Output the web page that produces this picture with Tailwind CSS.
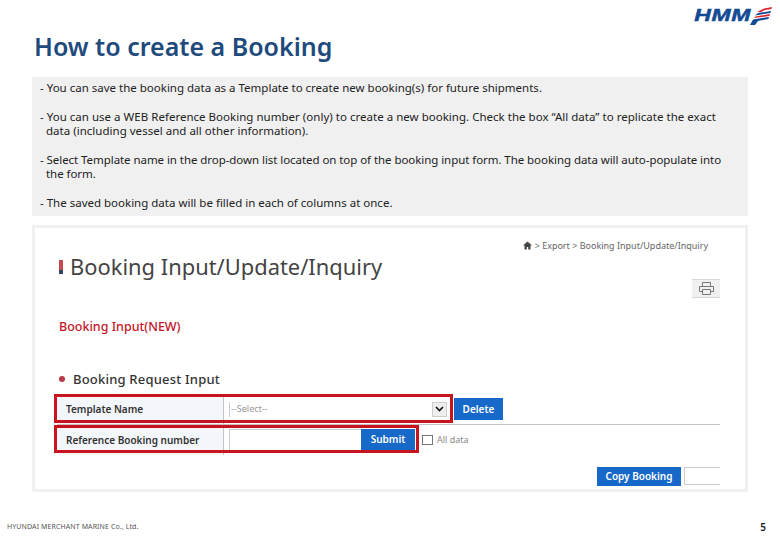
<!DOCTYPE html>
<html lang="en">
<head>
    <meta charset="UTF-8">
    <title>How to create a Booking</title>
    <script src="https://cdn.jsdelivr.net/npm/@tailwindcss/browser@4"></script>
</head>
<body class="bg-white">
<div class="relative w-[780px] h-[540px] overflow-hidden font-['Noto_Sans',sans-serif]">

    <!-- Title + logo -->
    <header class="h-[77px] pl-[34px] pr-[8px] flex justify-between">
        <h1 class="mt-[30px] text-[25px] leading-[32px] font-semibold text-[#1f4a7c]">How to create a Booking</h1>
        <div class="mt-[6px] h-[19px] flex items-center">
            <span class="font-['Liberation_Sans',sans-serif] italic font-bold text-[17px] leading-[18px] tracking-[0.5px] text-[#134a94] scale-x-[1.35] origin-right mr-[-2px] [-webkit-text-stroke:0.5px_#134a94]">HMM</span>
            <svg width="23" height="18" viewBox="0 0 23 18">
                <path d="M8 5 L15 1.5 L23 0 L22.4 2 L16 3 L12 5 Z" fill="#d9232e"/>
                <path d="M6 8.5 L9 6 L22 4 L21.4 6 Z" fill="#134a94"/>
                <path d="M5 11 L6.5 9.5 L21 7 L20.4 9 Z" fill="#d9232e"/>
                <path d="M1 18 L4 12.5 L20 10 L19.4 12 L9 14 L6 18 Z" fill="#134a94"/>
            </svg>
        </div>
    </header>

    <!-- Notes box -->
    <section class="ml-[32px] w-[716px] h-[139px] bg-[#f0f0f0] pl-[8px] pt-[4px] text-[11.5px] leading-[14.4px] text-[#222]">
        <p>- You can save the booking data as a Template to create new booking(s) for future shipments.</p>
        <p class="mt-[14.4px] tracking-[0.02px]">- You can use a WEB Reference Booking number (only) to create a new booking. Check the box “All data” to replicate the exact<br><span class="pl-[6px]">data (including vessel and all other information).</span></p>
        <p class="mt-[14.4px] tracking-[-0.06px]">- Select Template name in the drop-down list located on top of the booking input form. The booking data will auto-populate into<br><span class="pl-[6px]">the form.</span></p>
        <p class="mt-[14.4px]">- The saved booking data will be filled in each of columns at once.</p>
    </section>

    <!-- Screenshot panel -->
    <section class="relative mt-[9px] ml-[32px] w-[716px] h-[267px] border-[3px] border-[#f0f0f0] pl-[24px] pr-[25px] overflow-hidden">
        <div class="h-[27px] pt-[8px] pr-[12px] flex justify-end items-center gap-[3px] text-[9px] leading-[12px] text-[#666]">
            <svg width="9" height="9" viewBox="0 0 9 9"><path d="M4.5 0.5 L9 4.5 H7.5 V8.5 H5.2 V6 H3.8 V8.5 H1.5 V4.5 H0 Z" fill="#444"/></svg>
            <span>&gt; Export &gt; Booking Input/Update/Inquiry</span>
        </div>
        <div class="h-[24px] flex items-center">
            <span class="w-[4px] h-[14px] mr-[7px] bg-[linear-gradient(#c8484f_0_70%,#34435e_70%)]"></span>
            <h2 class="text-[21.9px] leading-[24px] text-[#444]">Booking Input/Update/Inquiry</h2>
        </div>
        <div class="flex justify-end">
            <button class="w-[28px] h-[19px] flex items-center justify-center bg-[#f0f0f0] border-t border-b border-[#d8d8d8]">
                <svg width="15" height="13" viewBox="0 0 15 13" fill="none" stroke="#777"><path d="M3.5 4.5 V0.5 H11.5 V4.5 M3 9.5 H0.5 V4.5 H14.5 V9.5 H12 M3.5 7.5 H11.5 V12.5 H3.5 Z"/></svg>
            </button>
        </div>
        <p class="mt-[21px] text-[12.5px] leading-[16px] font-medium text-[#c2162a]">Booking Input(NEW)</p>
        <div class="mt-[35px] h-[18px] flex items-center">
            <span class="w-[6px] h-[6px] rounded-full bg-[#b93a46] mr-[8px]"></span>
            <h3 class="text-[13px] leading-[18px] font-medium text-[#333] tracking-[0.2px]">Booking Request Input</h3>
        </div>

        <!-- Form rows -->
        <div class="mt-[8px] ml-[-2px] w-[663px] text-[10px] font-semibold text-[#333]">
            <div class="flex h-[29px] border-b border-[#c4c4c4]">
                <div class="w-[167px] pl-[9px] pb-[2px] flex items-center bg-[#f3f6fa] border-r border-[#c4c4c4]">Template Name</div>
                <div class="flex items-center pl-[5px] pb-[2px]">
                    <div class="w-[218px] h-[15px] pl-[1px] flex justify-between items-center border-l border-[#ccc] text-[9px] font-normal text-[#999]">
                        <span>--Select--</span>
                        <span class="w-[15px] h-[15px] flex items-center justify-center bg-[#eee] border border-[#ccc]">
                            <svg width="9" height="6" viewBox="0 0 9 6" fill="none" stroke="#111" stroke-width="1.6"><path d="M1 1 L4.5 4.5 L8 1"/></svg>
                        </span>
                    </div>
                    <button class="ml-[7px] w-[49px] h-[22px] bg-[#1769c9] text-white text-[10px] font-semibold">Delete</button>
                </div>
            </div>
            <div class="flex h-[30px]">
                <div class="w-[167px] pl-[9px] flex items-center bg-[#f3f6fa] border-r border-[#c4c4c4]">Reference Booking number</div>
                <div class="flex items-center pl-[5px] pb-[1px]">
                    <div class="w-[132px] h-[21px] border-t border-l border-[#ccc]"></div>
                    <button class="w-[54px] h-[21px] bg-[#1769c9] text-white text-[10px] font-semibold">Submit</button>
                    <span class="ml-[7px] w-[11px] h-[10px] border border-[#777]"></span>
                    <span class="ml-[4px] text-[9px] font-normal text-[#888]">All data</span>
                </div>
            </div>
        </div>
        <div class="mt-[12px] flex justify-end">
            <button class="w-[84px] h-[19px] bg-[#1769c9] text-white text-[10px] font-semibold">Copy Booking</button>
            <div class="ml-[3px] w-[36px] h-[18px] border-t border-b border-l border-[#ccc]"></div>
        </div>

        <!-- Red highlight frames -->
        <div class="absolute left-[19px] top-[166px] w-[399px] h-[29px] border-[3px] border-[#c8141e]"></div>
        <div class="absolute left-[19px] top-[197px] w-[365px] h-[28px] border-[3px] border-[#c8141e]"></div>
    </section>

    <!-- Footer -->
    <footer class="absolute left-[7px] right-[14px] top-[518px] flex justify-between items-center">
        <span class="text-[7px] leading-[18px] tracking-[0.1px] text-[#555]">HYUNDAI MERCHANT MARINE Co., Ltd.</span>
        <span class="text-[10px] font-semibold leading-[18px] text-[#222]">5</span>
    </footer>
</div>
</body>
</html>
